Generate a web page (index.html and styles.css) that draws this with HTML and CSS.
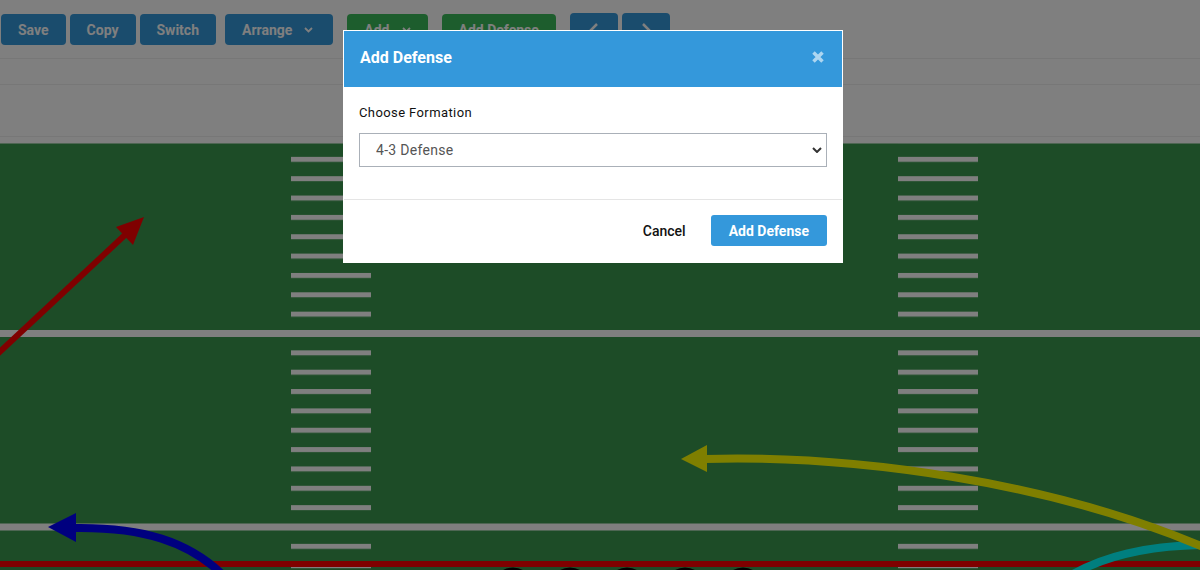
FILE: index.html
```html
<!DOCTYPE html>
<html>
<head>
    <meta charset="UTF-8">
    <meta name="viewport" content="width=device-width, initial-scale=1.0">
    <title>Play Designer</title>
    <link rel="stylesheet" href="styles.css">
</head>
<body>
    <div class="top">
        <div class="toolbar">
            <div class="btn-group">
                <button class="btn btn-blue">Save</button>
                <button class="btn btn-blue">Copy</button>
                <button class="btn btn-blue">Switch</button>
            </div>
            <button class="btn btn-blue arrange">Arrange
                <svg class="caret" width="9" height="6" viewBox="0 0 9 6"><polyline points="1,1 4.5,4.5 8,1"/></svg>
            </button>
            <button class="btn btn-green">Add
                <svg class="caret" width="9" height="6" viewBox="0 0 9 6"><polyline points="1,1 4.5,4.5 8,1"/></svg>
            </button>
            <button class="btn btn-green">Add Defense</button>
            <div class="btn-group">
                <button class="btn btn-blue btn-icon">
                    <svg width="10" height="16" viewBox="0 0 10 16"><polyline points="8,2 2,8 8,14"/></svg>
                </button>
                <button class="btn btn-blue btn-icon">
                    <svg width="10" height="16" viewBox="0 0 10 16"><polyline points="2,2 8,8 2,14"/></svg>
                </button>
            </div>
        </div>
        <div class="subbar"></div>
        <div class="titlebar"></div>
    </div>

    <div class="field">
        <svg class="pitch" width="1200" height="427" viewBox="0 143 1200 427">
            <defs>
                <pattern id="hashes" x="0" y="137.5" width="1200" height="19.35" patternUnits="userSpaceOnUse">
                    <rect x="291" y="0" width="80" height="5" fill="#fff"/>
                    <rect x="898" y="0" width="80" height="5" fill="#fff"/>
                </pattern>
            </defs>
            <rect x="0" y="143" width="1200" height="427" fill="#3b994e"/>
            <rect x="0" y="143" width="1200" height="427" fill="url(#hashes)"/>

            <!-- yard lines -->
            <rect x="0" y="136.5" width="1200" height="7" fill="#fff"/>
            <rect x="0" y="330" width="1200" height="7" fill="#fff"/>
            <rect x="0" y="523.5" width="1200" height="7" fill="#fff"/>

            <!-- line of scrimmage -->
            <rect x="0" y="561" width="1200" height="6" fill="#f00"/>

            <!-- routes -->
            <path d="M -10 361 L 126 234" stroke="#f00" stroke-width="6" fill="none"/>
            <polygon points="144,217 116,227 133,245" fill="#f00"/>

            <path d="M 74 528 C 140 527, 190 540, 228 580" stroke="#00f" stroke-width="8" fill="none"/>
            <polygon points="48,527 76,513 76,542" fill="#00f"/>

            <path d="M 1060 582 C 1100 555, 1150 545, 1210 545" stroke="#0ff" stroke-width="8" fill="none"/>

            <path d="M 705 459 C 850 455, 1050 480, 1210 550" stroke="#ff0" stroke-width="8" fill="none"/>
            <polygon points="681,459 707,445 707,472" fill="#ff0"/>

            <!-- offense -->
            <circle cx="513" cy="588" r="19" fill="#fff" stroke="#000" stroke-width="3"/>
            <circle cx="570" cy="588" r="19" fill="#fff" stroke="#000" stroke-width="3"/>
            <circle cx="627" cy="588" r="19" fill="#fff" stroke="#000" stroke-width="3"/>
            <circle cx="685" cy="588" r="19" fill="#fff" stroke="#000" stroke-width="3"/>
            <circle cx="743" cy="588" r="19" fill="#fff" stroke="#000" stroke-width="3"/>
        </svg>
    </div>

    <div class="overlay">
        <div class="modal">
            <div class="modal-header">
                <h4 class="modal-title">Add Defense</h4>
                <button class="modal-close">
                    <svg width="12" height="12" viewBox="0 0 12 12"><path d="M1.5 1.5 L10.5 10.5 M10.5 1.5 L1.5 10.5"/></svg>
                </button>
            </div>
            <div class="modal-body">
                <label for="formation">Choose Formation</label>
                <div class="select-wrap">
                    <select id="formation">
                        <option>4-3 Defense</option>
                        <option>3-4 Defense</option>
                        <option>Nickel</option>
                        <option>Dime</option>
                    </select>
                    <svg width="10" height="6" viewBox="0 0 10 6"><polyline points="1,1 5,5 9,1"/></svg>
                </div>
            </div>
            <div class="modal-footer">
                <button class="btn-link">Cancel</button>
                <button class="btn-primary">Add Defense</button>
            </div>
        </div>
    </div>
</body>
</html>
```

FILE: styles.css
```css
* {
    box-sizing: border-box;
}

html, body {
    margin: 0;
    padding: 0;
    height: 100%;
    overflow: hidden;
}

body {
    font-family: Roboto, "Liberation Sans", sans-serif;
    background: #fff;
    color: #111;
}

.top {
    padding-bottom: 6px;
}

.toolbar {
    display: flex;
    align-items: center;
    height: 59px;
    padding: 1px 0 0 1px;
    border-bottom: 1px solid #eee;
}

.toolbar > * + * {
    margin-left: 14px;
}

.toolbar > .arrange {
    margin-left: 9px;
    padding-right: 20px;
}

.btn-group {
    display: flex;
    align-items: center;
    gap: 4px;
}

.btn {
    display: inline-flex;
    align-items: center;
    gap: 12px;
    height: 31px;
    padding: 0 17px;
    border: none;
    border-radius: 4px;
    font-family: Roboto, "Liberation Sans", sans-serif;
    font-size: 14px;
    font-weight: 700;
    color: #fff;
    cursor: pointer;
}

.btn-blue {
    background: #3498db;
}

.btn-green {
    background: #3bbb5b;
}

.btn-icon {
    width: 48px;
    height: 33px;
    padding: 0;
    justify-content: center;
}

.btn svg {
    fill: none;
    stroke: #fff;
    stroke-width: 2.5;
}

.btn .caret {
    stroke-width: 1.8;
}

.subbar {
    height: 26px;
    border-bottom: 1px solid #eee;
}

.titlebar {
    height: 52px;
    border-bottom: 1px solid #eee;
}

.field {
    height: 427px;
}

.pitch {
    display: block;
}

/* modal */

.overlay {
    position: fixed;
    top: 0;
    left: 0;
    right: 0;
    bottom: 0;
    display: flex;
    justify-content: center;
    align-items: flex-start;
    padding: 30px 14px 0 0;
    background: rgba(0, 0, 0, 0.5);
}

.modal {
    width: 500px;
    background: #fff;
    border: 1px solid #fff;
}

.modal-header {
    display: flex;
    align-items: center;
    justify-content: space-between;
    height: 56px;
    padding: 0 18px 4px 16px;
    background: #3498db;
}

.modal-title {
    margin: 0;
    font-size: 16px;
    font-weight: 700;
    color: #fff;
}

.modal-close {
    display: flex;
    padding: 0;
    border: none;
    background: none;
    cursor: pointer;
}

.modal-close svg {
    stroke: rgba(255, 255, 255, 0.6);
    stroke-width: 3.5;
}

.modal-body {
    padding: 17px 15px 32px;
}

.modal-body label {
    display: block;
    margin-bottom: 11px;
    font-size: 13px;
    line-height: 18px;
    letter-spacing: 0.4px;
}

.select-wrap {
    position: relative;
}

.select-wrap select {
    display: block;
    width: 100%;
    height: 34px;
    padding: 0 16px;
    border: 1px solid #aab0b8;
    border-radius: 0;
    background: #fff;
    font-family: Roboto, "Liberation Sans", sans-serif;
    font-size: 14px;
    letter-spacing: 0.3px;
    color: #555;
    appearance: none;
    -webkit-appearance: none;
}

.select-wrap svg {
    position: absolute;
    right: 5px;
    top: 14px;
    fill: none;
    stroke: #333;
    stroke-width: 2;
    pointer-events: none;
}

.modal-footer {
    display: flex;
    justify-content: flex-end;
    align-items: center;
    gap: 13px;
    padding: 15px 15px 16px;
    border-top: 1px solid #e5e5e5;
}

.btn-link, .btn-primary {
    height: 31px;
    border: none;
    font-family: Roboto, "Liberation Sans", sans-serif;
    font-size: 14px;
    cursor: pointer;
}

.btn-link {
    padding: 0 12px;
    background: none;
    color: #111;
    font-weight: 500;
}

.btn-primary {
    padding: 0 18px;
    border-radius: 3px;
    background: #3498db;
    color: #fff;
    font-weight: 700;
}
```
